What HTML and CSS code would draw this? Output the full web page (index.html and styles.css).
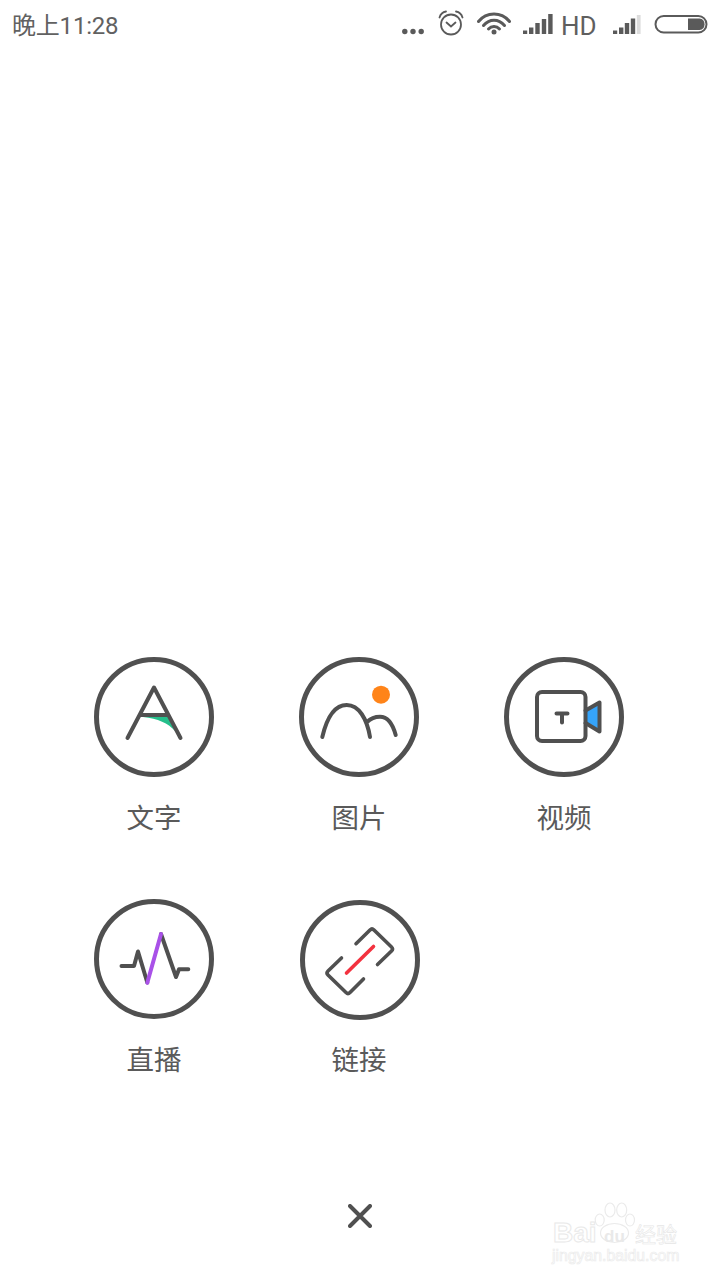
FILE: index.html
```html
<!DOCTYPE html>
<html lang="zh-CN">
<head>
<meta charset="utf-8">
<title>发布</title>
<link rel="stylesheet" href="styles.css">
</head>
<body>
<div class="page">
  <header class="status">
    <span class="time">晚上11:28</span>
    <div class="status-icons">
      <svg class="si si-dots" viewBox="0 0 36 52"><circle cx="3.800" cy="31.500" r="2.700"/><circle cx="12" cy="31.500" r="2.700"/><circle cx="20.200" cy="31.500" r="2.700"/></svg>
      <svg class="si si-alarm" viewBox="0 0 39 52"><g class="ln" stroke-width="1.800"><circle cx="14" cy="24.500" r="10"/><path d="M9.500 22.500l4.500 4 4.500-4"/><path d="M2.500 17.500c1-3.500 3.500-5.500 6.500-6M25.500 17.500c-1-3.500-3.500-5.500-6.500-6"/></g></svg>
      <svg class="si si-wifi" viewBox="0 0 44 52"><g class="ln" stroke-width="3"><path d="M2.500 21.500C10.500 11.500 25.500 11.500 33.500 21.500"/><path d="M7.500 25.500C13.500 18.500 22.500 18.500 28.500 25.500"/><path d="M12.500 29C15.500 25.800 20.500 25.800 23.500 29"/></g><circle cx="18" cy="32" r="2.500"/></svg>
      <svg class="si si-signal" viewBox="0 0 40 52"><rect x="3" y="30.500" width="4.200" height="3.500"/><rect x="9" y="27.500" width="4.400" height="6.500"/><rect x="15.300" y="23" width="4.400" height="11"/><rect x="21.800" y="19" width="4.400" height="15"/><rect x="28.200" y="14" width="4.400" height="20"/></svg>
      <span class="hd">HD</span>
      <svg class="si si-signal2" viewBox="0 0 42 52"><rect x="3" y="30.500" width="4.200" height="3.500"/><rect x="9" y="27.500" width="4.400" height="6.500"/><rect x="14.800" y="23" width="4.400" height="11"/><rect x="20.800" y="18.500" width="4.400" height="15.500"/><rect class="dim" x="26.800" y="15" width="3.800" height="19"/></svg>
      <svg class="si si-batt" viewBox="0 0 56 52"><rect class="ln" x="3.500" y="16" width="51" height="16.500" rx="8.200" stroke-width="2"/><path d="M36 18.500h11.500a5.800 5.800 0 0 1 0 11.500H36z"/></svg>
    </div>
  </header>

  <div class="spacer"></div>

  <main class="grid">
    <div class="tile">
      <svg class="icon" viewBox="0 0 120 120">
        <circle class="ring" cx="60" cy="60" r="57.500"/>
        <path class="c-green" d="M49 60H74L81.500 74.500C74 66 64 61.500 49 60z"/>
        <path class="glyph" d="M33.500 81L60 30.500 86.500 81M46.500 58H73.500"/>
      </svg>
      <span class="label">文字</span>
    </div>
    <div class="tile">
      <svg class="icon" viewBox="0 0 120 120">
        <circle class="ring" cx="60" cy="60" r="57.500"/>
        <path class="glyph" d="M23.300 80C28 60 36 48 47.700 48 60 48 68 62 71 80M68 65C72 61 76 59.700 81 59.700 89 59.700 94 68 96.700 78"/>
        <circle class="c-orange" cx="82" cy="37.700" r="9"/>
      </svg>
      <span class="label">图片</span>
    </div>
    <div class="tile">
      <svg class="icon" viewBox="0 0 120 120">
        <circle class="ring" cx="60" cy="60" r="57.500"/>
        <path class="c-blue" d="M81 55L95 46V74L81 65z"/>
        <rect class="glyph" x="33" y="35" width="48.500" height="49" rx="5"/>
        <path class="glyph" d="M81.500 53.500L95.500 45.500V74.500L81.500 66M52.500 56.500H63.500M58 56.500V65.500"/>
      </svg>
      <span class="label">视频</span>
    </div>
    <div class="tile">
      <svg class="icon" viewBox="0 0 120 120">
        <circle class="ring" cx="60" cy="60" r="57.500"/>
        <path class="glyph" d="M27.500 67H40L44 52.500 53.300 83.500M67 35L82 78 85 70.300H94.300"/>
        <path class="glyph c-purple" d="M53.300 83.700L67 35"/>
      </svg>
      <span class="label">直播</span>
    </div>
    <div class="tile">
      <svg class="icon icon-link" viewBox="0 0 120 120">
        <circle class="ring" cx="60" cy="60" r="57.500"/>
        <path class="glyph thin" d="M56 43.700L70 30Q72 28 74 30L91.500 47Q93.500 49 91.500 51L77.500 64.500M41.500 58L28 71Q26 73 28 75L46 92.500Q48 94.500 50 92.500L63.500 79"/>
        <path class="glyph thin c-red" d="M46.500 73L73.500 46.500"/>
      </svg>
      <span class="label">链接</span>
    </div>
  </main>

  <footer class="close">
    <svg class="close-x" viewBox="0 0 24 24"><path d="M2 2L22 22M22 2L2 22"/></svg>
  </footer>

  <div class="wm">
    <svg class="wm-paw" viewBox="0 0 48 48"><ellipse cx="7.700" cy="18" rx="4.500" ry="6"/><ellipse cx="18" cy="8" rx="5" ry="7"/><ellipse cx="29.700" cy="8" rx="5" ry="7"/><ellipse cx="38" cy="18" rx="4.500" ry="6"/><ellipse cx="22.500" cy="31" rx="14" ry="9.500"/></svg>
    <div class="wm-top"><span class="wm-bai">Bai</span><span class="wm-du">du</span><span class="wm-jy">经验</span></div>
    <div class="wm-url">jingyan.baidu.com</div>
  </div>
</div>
</body>
</html>
```

FILE: styles.css
```css
* { box-sizing: border-box; }
html, body { margin: 0; padding: 0; background: #fff; }
body { font-family: "Noto Sans CJK SC", "Noto Sans", sans-serif; color: #505050; }

.page { position: relative; width: 720px; height: 1280px; display: flex; flex-direction: column; overflow: hidden; }

.status { height: 52px; display: flex; justify-content: space-between; align-items: center; padding: 0 12px; flex: none; }
.time { font-family: Roboto, "Noto Sans CJK SC", sans-serif; font-size: 24px; line-height: 52px; color: #616161; letter-spacing: -0.2px; }
.status-icons { display: flex; align-items: center; }
.si { display: block; height: 52px; fill: #5a5a5a; flex: none; }
.si-dots { width: 36px; }
.si-alarm { width: 39px; }
.si-wifi { width: 44px; }
.si-signal { width: 40px; }
.si-signal2 { width: 42px; }
.si-batt { width: 56px; }
.si .ln { fill: none; stroke: #5a5a5a; stroke-linecap: round; }
.si .dim { fill: #dcdcdc; }
.hd { width: 50px; padding-left: 1px; font-family: Roboto, sans-serif; font-size: 26px; line-height: 52px; color: #5f5f5f; }

.spacer { flex: 1; }

.grid { display: grid; grid-template-columns: repeat(3, 120px); column-gap: 85px; row-gap: 61px; padding-left: 94px; flex: none; }
.tile { display: flex; flex-direction: column; align-items: center; width: 120px; height: 181px; }
.icon { display: block; width: 120px; height: 120px; flex: none; overflow: visible; }
.icon-link { transform: translate(1px, 1px); }
.ring { fill: none; stroke: #505050; stroke-width: 5; }
.glyph { fill: none; stroke: #505050; stroke-width: 4; stroke-linecap: round; stroke-linejoin: round; }
.glyph.thin { stroke-width: 3.600; }
.c-green { fill: #25bf8b; }
.c-orange { fill: #ff8419; }
.c-blue { fill: #35a4fb; }
.glyph.c-purple { stroke: #a951e8; }
.glyph.c-red { stroke: #f3323f; }
.label { margin-top: 19px; font-size: 27.500px; line-height: 40px; color: #5a5a5a; white-space: nowrap; }

.close { flex: none; height: 200px; padding-top: 124px; display: flex; justify-content: center; }
.close-x { display: block; width: 24px; height: 24px; }
.close-x path { fill: none; stroke: #505050; stroke-width: 4; stroke-linecap: round; }

.wm { position: absolute; left: 552px; top: 1202px; width: 130px; height: 64px; }
.wm-paw { position: absolute; left: 40px; top: 0; width: 48px; height: 48px; fill: #fff; stroke: #ebebeb; stroke-width: 1.200; }
.wm-top { position: absolute; left: 1px; top: 16px; display: flex; align-items: baseline; }
.wm-bai { font-family: "Liberation Sans", sans-serif; font-size: 28px; font-weight: 700; line-height: 30px; color: #fff; -webkit-text-stroke: 1px #e9e9e9; width: 46px; }
.wm-du { font-family: "Liberation Sans", sans-serif; font-size: 17px; font-weight: 700; line-height: 30px; width: 36px; padding-right: 5px; text-align: center; color: #e9e9e9; }
.wm-jy { font-size: 21px; line-height: 30px; color: #fff; -webkit-text-stroke: 0.600px #e6e6e6; white-space: nowrap; }
.wm-url { position: absolute; left: 0; top: 45px; font-family: "Liberation Sans", sans-serif; font-size: 15.800px; line-height: 18px; color: #fff; -webkit-text-stroke: 0.700px #ebebeb; white-space: nowrap; }
```
